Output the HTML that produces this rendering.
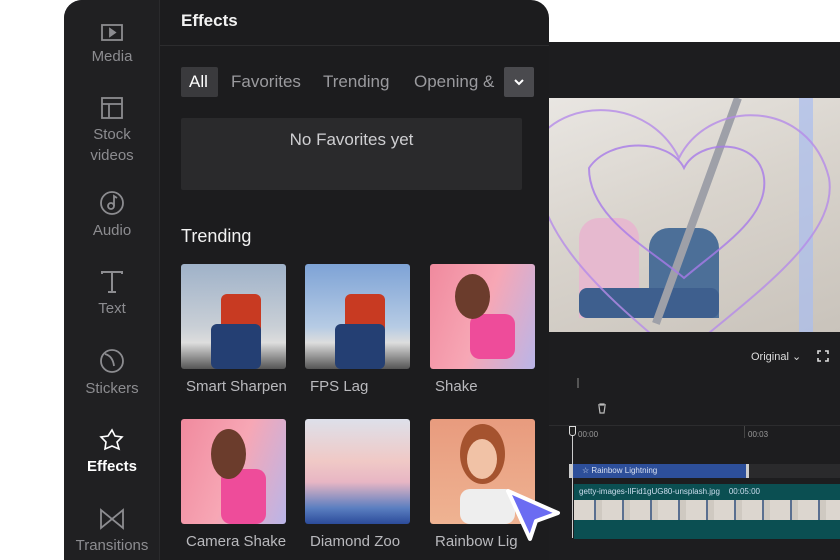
<!DOCTYPE html>
<html><head><meta charset="utf-8"><style>
*{margin:0;padding:0;box-sizing:border-box}
body{width:840px;height:560px;overflow:hidden;background:#fff;font-family:"Liberation Sans",sans-serif;position:relative}
.ed{position:absolute;left:540px;top:42px;width:300px;height:518px;background:#1d1d1f}
.prev{position:absolute;left:549px;top:98px;width:291px;height:234px;background:linear-gradient(160deg,#e9e6e2 0%,#d9d4cd 45%,#c9c3bb 100%);overflow:hidden}
.panel{position:absolute;left:64px;top:0;width:485px;height:560px;background:#1c1c1e;border-radius:18px 18px 0 0;overflow:hidden}
.side{position:absolute;left:0;top:0;width:96px;height:560px;background:#202022;border-right:1px solid #2a2a2c}
.si{position:absolute;left:0;width:96px;text-align:center;color:#8c8c90;font-size:15px;line-height:21px}
.si svg{display:block;margin:0 auto 4px}
.t{position:absolute;color:#e6e6e6}
.th{position:absolute;width:105px;height:105px;border-radius:3px;overflow:hidden}
.lb{position:absolute;color:#b9b9bd;font-size:15px}
.tl{position:absolute;font-size:8px;color:#9a9a9a}
</style></head><body>
<div class="ed">
 <div style="position:absolute;left:211px;top:308px;color:#ddd;font-size:11px">Original ⌄</div>
 <svg style="position:absolute;left:277px;top:308px" width="12" height="12" fill="none" stroke="#ddd" stroke-width="1.6"><path d="M1 4V1h3M8 1h3v3M11 8v3H8M4 11H1V8"/></svg>
 <div style="position:absolute;left:37px;top:336px;width:2px;height:10px;background:#555"></div>
 <svg style="position:absolute;left:57px;top:361px" width="10" height="11" fill="none" stroke="#bbb" stroke-width="1.2"><path d="M1 2h8M3 2V1h4v1M2 3l1 7h4l1-7"/></svg>
 <div style="position:absolute;left:0;top:383px;width:300px;height:1px;background:#2c2c2e"></div>
 <div class="tl" style="left:38px;top:388px">00:00</div>
 <div class="tl" style="left:208px;top:388px">00:03</div>
 <div style="position:absolute;left:204px;top:384px;width:1px;height:12px;background:#444"></div>
 <div style="position:absolute;left:29px;top:422px;width:271px;height:14px;background:#2a2a2c"></div>
 <div style="position:absolute;left:29px;top:422px;width:180px;height:14px;background:#2d4f9a;border:1px solid #ccc;border-width:0 3px;color:#d8e0f0;font-size:8px;line-height:14px;padding-left:10px">☆ Rainbow Lightning</div>
 <div style="position:absolute;left:34px;top:442px;width:266px;height:55px;background:#0b4f52">
  <div style="color:#cde;font-size:8px;padding:3px 5px">getty-images-lIFid1gUG80-unsplash.jpg &nbsp;&nbsp; 00:05:00</div>
  <div style="position:absolute;left:0;top:16px;width:266px;height:20px;background:repeating-linear-gradient(90deg,#dcd6cf 0 20px,#5a6f90 20px 22px,#cfc9c1 22px 28px)"></div>
 </div>
 <div style="position:absolute;left:32px;top:384px;width:1px;height:112px;background:#ccc"></div>
 <div style="position:absolute;left:29px;top:384px;width:7px;height:10px;border:1px solid #ddd;border-radius:0 0 3px 3px;background:#222"></div>
</div>
<div class="prev">
 <div style="position:absolute;left:30px;top:120px;width:60px;height:100px;background:#e6b9cf;border-radius:20px 20px 0 0"></div>
 <div style="position:absolute;left:100px;top:130px;width:70px;height:90px;background:#4c6f98;border-radius:20px 20px 0 0"></div>
 <div style="position:absolute;left:30px;top:190px;width:140px;height:30px;background:#3e5f8e;border-radius:8px"></div>
 <div style="position:absolute;left:185px;top:0;width:8px;height:240px;background:#9ea0a8;transform:rotate(20deg);transform-origin:top"></div>
 <div style="position:absolute;left:250px;top:0;width:14px;height:234px;background:rgba(170,190,240,.7)"></div>
 <svg style="position:absolute;left:0;top:0" width="291" height="234" fill="none" stroke-width="2"><path d="M-10 40C20 0 100 0 130 60C160 0 260 0 280 80C290 140 200 200 130 260C60 200 -30 130 -10 40Z" stroke="#b58be8" opacity=".8"/><path d="M40 70C60 40 120 40 135 70C150 40 210 40 215 80C220 120 170 150 135 180C100 150 40 120 40 70Z" stroke="#a87ae8" opacity=".8"/></svg>
</div>
<div class="panel">
 <div class="side">
  <div class="si" style="top:24px"><svg width="24" height="18" fill="none" stroke="#8c8c90" stroke-width="1.8"><rect x="2" y="1" width="20" height="15"/><path d="M10 5l5 3.5-5 3.5z" fill="#8c8c90"/></svg>Media</div>
  <div class="si" style="top:96px"><svg width="24" height="24" fill="none" stroke="#8c8c90" stroke-width="1.8"><rect x="2" y="2" width="20" height="20"/><path d="M2 8h20M9 8v14"/></svg>Stock<br>videos</div>
  <div class="si" style="top:190px"><svg width="26" height="26" fill="none" stroke="#8c8c90" stroke-width="1.8"><circle cx="13" cy="13" r="11"/><circle cx="12" cy="16" r="3"/><path d="M15 16V6l3 2"/></svg>Audio</div>
  <div class="si" style="top:270px"><svg width="26" height="24" fill="none" stroke="#8c8c90" stroke-width="2"><path d="M3 4V2h20v2M13 2v20M9 22h8"/></svg>Text</div>
  <div class="si" style="top:348px"><svg width="26" height="26" fill="none" stroke="#8c8c90" stroke-width="1.8"><circle cx="13" cy="13" r="11"/><path d="M6 6c4 1 8 4 9 12"/></svg>Stickers</div>
  <div class="si" style="top:428px;color:#fff;font-weight:bold"><svg width="26" height="24" fill="none" stroke="#fff" stroke-width="1.6"><path d="M13 2l3 6 7 1-5 5 2 7-7-3-7 3 1-7-5-5 7-1z"/></svg>Effects</div>
  <div class="si" style="top:507px"><svg width="26" height="24" fill="none" stroke="#8c8c90" stroke-width="1.8"><path d="M2 3v18l22-18v18z"/></svg>Transitions</div>
 </div>
 <div class="t" style="left:117px;top:11px;font-size:17px;color:#f2f2f2;font-weight:bold">Effects</div>
 <div style="position:absolute;left:96px;top:45px;width:389px;height:1px;background:#2c2c2e"></div>
 <div style="position:absolute;left:117px;top:67px;width:37px;height:30px;background:#3a3a3d;border-radius:2px"></div>
 <div class="t" style="left:125px;top:72px;font-size:17px;color:#fff">All</div>
 <div class="t" style="left:167px;top:72px;font-size:17px;color:#9a9a9e">Favorites</div>
 <div class="t" style="left:259px;top:72px;font-size:17px;color:#9a9a9e">Trending</div>
 <div class="t" style="left:350px;top:72px;font-size:17px;color:#9a9a9e">Opening &amp;</div>
 <div style="position:absolute;left:440px;top:67px;width:30px;height:30px;background:#4a4a4e;border-radius:2px"></div>
 <svg style="position:absolute;left:449px;top:77px" width="12" height="10" fill="none" stroke="#fff" stroke-width="2"><path d="M2 3l4 4 4-4"/></svg>
 <div style="position:absolute;left:117px;top:118px;width:341px;height:72px;background:#2a2a2c;border-radius:2px"></div>
 <div class="t" style="left:117px;top:130px;width:341px;text-align:center;font-size:17px;color:#cfcfd2">No Favorites yet</div>
 <div class="t" style="left:117px;top:226px;font-size:18px;color:#f2f2f2">Trending</div>
 <div class="th" style="left:117px;top:264px;background:linear-gradient(180deg,#9fb2c9 0%,#c9cfd6 60%,#ddd 75%,#555 100%)"><div style="position:absolute;left:40px;top:30px;width:40px;height:40px;background:#c83a22;border-radius:6px"></div><div style="position:absolute;left:30px;top:60px;width:50px;height:45px;background:#243f73;border-radius:6px"></div></div>
 <div class="th" style="left:241px;top:264px;background:linear-gradient(180deg,#7ea3d6 0%,#b6cbe4 60%,#ddd 75%,#555 100%)"><div style="position:absolute;left:40px;top:30px;width:40px;height:40px;background:#c83a22;border-radius:6px"></div><div style="position:absolute;left:30px;top:60px;width:50px;height:45px;background:#243f73;border-radius:6px"></div></div>
 <div class="th" style="left:366px;top:264px;background:linear-gradient(110deg,#f08a9e 0%,#f7a7b5 50%,#b9b5e8 100%)"><div style="position:absolute;left:40px;top:50px;width:45px;height:45px;background:#ee4c9a;border-radius:10px"></div><div style="position:absolute;left:25px;top:10px;width:35px;height:45px;background:#6b3c2c;border-radius:50%"></div></div>
 <div class="lb" style="left:122px;top:378px">Smart Sharpen</div>
 <div class="lb" style="left:246px;top:378px">FPS Lag</div>
 <div class="lb" style="left:371px;top:378px">Shake</div>
 <div class="th" style="left:117px;top:419px;background:linear-gradient(110deg,#f08a9e 0%,#f7a7b5 50%,#b9b5e8 100%)"><div style="position:absolute;left:40px;top:50px;width:45px;height:55px;background:#ee4c9a;border-radius:10px"></div><div style="position:absolute;left:30px;top:10px;width:35px;height:50px;background:#6b3c2c;border-radius:50%"></div></div>
 <div class="th" style="left:241px;top:419px;background:linear-gradient(180deg,#dde0ea 0%,#f0c9c6 40%,#e8b6c4 60%,#5a7ec0 85%,#2b4b9a 100%)"></div>
 <div class="th" style="left:366px;top:419px;background:linear-gradient(180deg,#e89b7e 0%,#efb392 100%)"><div style="position:absolute;left:30px;top:70px;width:55px;height:35px;background:#eee;border-radius:10px"></div><div style="position:absolute;left:30px;top:5px;width:45px;height:60px;background:#a5532f;border-radius:50%"></div><div style="position:absolute;left:37px;top:20px;width:30px;height:40px;background:#f1c2a6;border-radius:50%"></div></div>
 <div class="lb" style="left:122px;top:533px">Camera Shake</div>
 <div class="lb" style="left:246px;top:533px">Diamond Zoo</div>
 <div class="lb" style="left:371px;top:533px">Rainbow Lig</div>
</div>
<svg style="position:absolute;left:500px;top:485px" width="70" height="60"><path d="M8 6L58 28 36 36 30 54Z" fill="#6b6cf2" stroke="#fff" stroke-width="4" stroke-linejoin="round"/></svg>
</body></html>
